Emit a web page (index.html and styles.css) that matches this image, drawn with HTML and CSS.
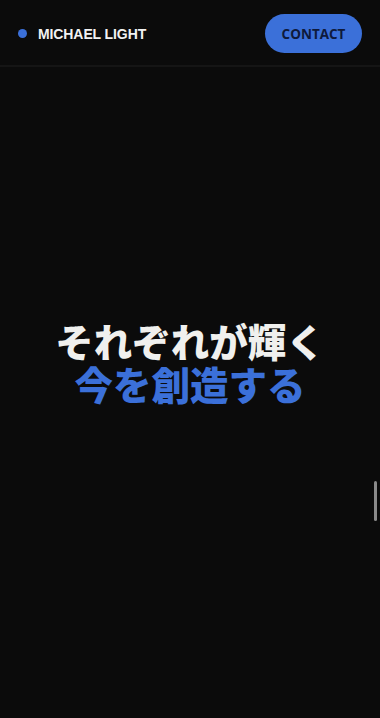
FILE: index.html
```html
<!DOCTYPE html>
<html lang="ja">
<head>
<meta charset="utf-8">
<meta name="viewport" content="width=device-width, initial-scale=1">
<title>Michael Light</title>
<link rel="stylesheet" href="styles.css">
</head>
<body>
<div class="page">
  <header class="header">
    <div class="brand">
      <span class="brand-dot"></span>
      <span class="brand-name">MICHAEL LIGHT</span>
    </div>
    <a class="contact" href="#">CONTACT</a>
  </header>
  <main class="hero">
    <h1 class="headline">
      <span class="line line-white">それぞれが輝く</span>
      <span class="line line-blue">今を創造する</span>
    </h1>
  </main>
  <div class="scroll-thumb"></div>
</div>
</body>
</html>
```
FILE: styles.css
```css
* { box-sizing: border-box; }
html, body {
  margin: 0;
  padding: 0;
  background: #0b0b0b;
}
.page {
  position: relative;
  width: 380px;
  height: 718px;
  overflow: hidden;
  background: #0b0b0b;
  display: flex;
  flex-direction: column;
}
.header {
  height: 67px;
  flex: 0 0 auto;
  display: flex;
  align-items: center;
  justify-content: space-between;
  padding: 2px 18px 0 18px;
  border-bottom: 2px solid #151515;
}
.brand {
  display: flex;
  align-items: center;
  gap: 11px;
}
.brand-dot {
  width: 9px;
  height: 9px;
  border-radius: 50%;
  background: #3b70d9;
}
.brand-name {
  font-family: "Liberation Sans", Arial, sans-serif;
  font-weight: 700;
  font-size: 14px;
  color: #f2f2f2;
  letter-spacing: -0.1px;
}
.contact {
  width: 97px;
  height: 39px;
  border-radius: 20px;
  background: #3b70d9;
  color: #0e1a3c;
  font-family: "Open Sans", sans-serif;
  font-weight: 700;
  font-size: 13.5px;
  text-decoration: none;
  display: flex;
  align-items: center;
  justify-content: center;
}
.hero {
  flex: 1 1 auto;
  display: flex;
  justify-content: center;
  padding-top: 252px;
}
.headline {
  margin: 0;
  font-family: "Noto Sans CJK JP", "Noto Sans", sans-serif;
  font-weight: 900;
  font-size: 38.5px;
  text-align: center;
  display: flex;
  flex-direction: column;
  align-items: center;
  gap: 0;
}
.line {
  display: block;
  height: 43px;
  line-height: 43px;
}
.line-white { color: #f0f0ee; }
.line-blue { color: #3b70d9; }
.scroll-thumb {
  position: absolute;
  right: 3px;
  top: 481px;
  width: 3px;
  height: 40px;
  border-radius: 2px;
  background: #8a8a8a;
}
```
